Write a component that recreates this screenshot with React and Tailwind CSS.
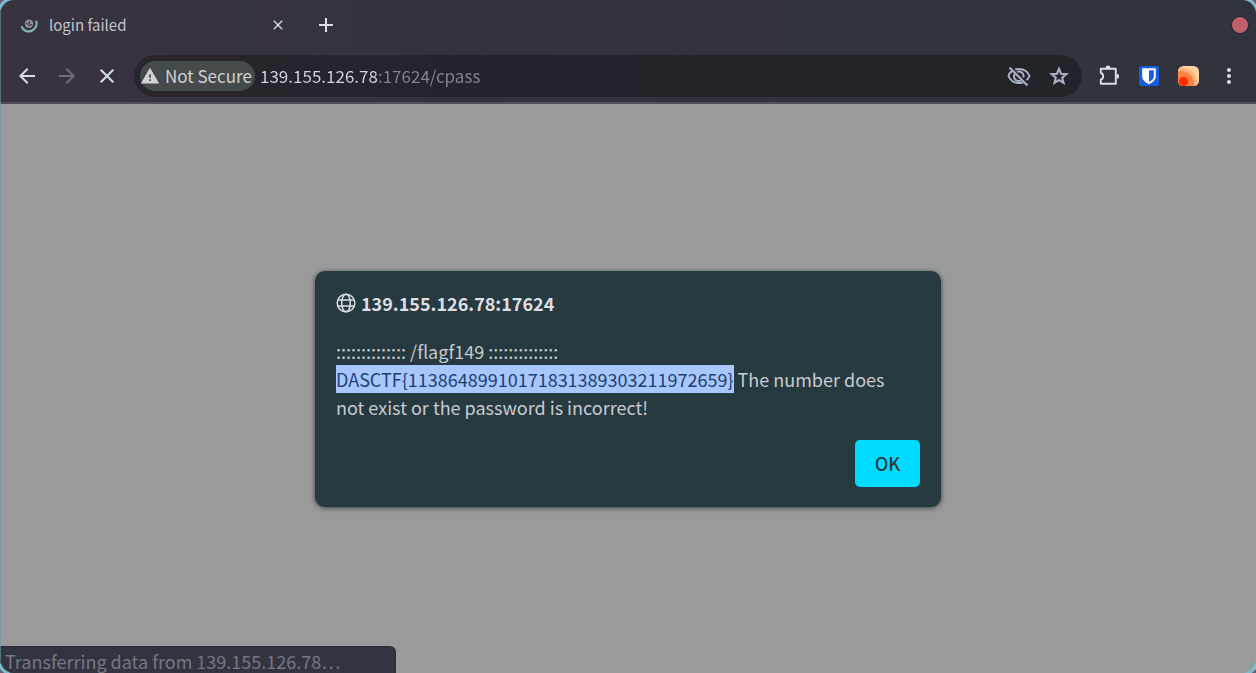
import React from "react";
import { MdArrowBack, MdArrowForward, MdClose, MdWarning, MdMoreVert, MdAdd } from "react-icons/md";

const TabSpinner = () => (
  <svg viewBox="0 0 20 20" className="size-5 shrink-0" aria-hidden="true">
    <path d="M2.400 11.200a7.800 7.800 0 0 0 14.800-5.400" fill="none" stroke="#7fb3ae" strokeWidth="2.200" />
    <circle cx="10" cy="8.800" r="4.200" fill="#97959f" />
    <path d="M7 8q1.500 1.800 3 .6t-.4-2.600M9.500 11.200q1.200-2 3.600-1.400" fill="none" stroke="#403c48" strokeWidth="1.200" />
  </svg>
);

const EyeOff = () => (
  <svg viewBox="0 0 24 24" className="size-6" fill="none" stroke="currentColor" strokeWidth="2" aria-hidden="true">
    <path d="M5.300 6.900C3.300 8.300 2 10.300 1.500 12c1.600 4 5.700 7 10.500 7 1.500 0 3-.3 4.300-.8M8.200 5.500C9.400 5.200 10.700 5 12 5c4.800 0 8.900 3 10.500 7-.6 1.600-1.700 3-3 4.100" />
    <path d="M7.800 9.800a4.600 4.600 0 0 0 6.600 6.200M10 7.900a4.600 4.600 0 0 1 6.300 5.600" />
    <path d="M2.500 3.500 20.500 21.500" />
  </svg>
);

const Star = () => (
  <svg viewBox="0 0 24 24" className="size-6" fill="none" stroke="currentColor" strokeWidth="2.100" strokeLinejoin="miter" aria-hidden="true">
    <path d="M12 4.800l2 4.900 5.300.4-4.100 3.500 1.300 5.200-4.500-2.800-4.500 2.800 1.300-5.200-4.100-3.500 5.300-.4z" />
  </svg>
);

const Puzzle = () => (
  <svg viewBox="0 0 22 22" className="size-[22px]" aria-hidden="true">
    <path
      d="M2.800 3.800h15v15h-15v-4.200c3.200-.8 3.200-5.800 0-6.600z"
      fill="none"
      stroke="currentColor"
      strokeWidth="1.900"
      strokeLinejoin="round"
    />
    <path d="M7.600 3a2.400 2.400 0 0 1 4.800 0zM18.600 8.800a2.500 2.500 0 0 1 0 5z" fill="currentColor" />
  </svg>
);

const Shield = () => (
  <svg viewBox="0 0 20 20" className="size-5" aria-hidden="true">
    <rect width="20" height="20" rx="2.500" fill="#175ddc" />
    <path d="M3.200 2.200h13.600v8.200c0 3.600-3.200 6-6.800 7.800-3.600-1.800-6.800-4.200-6.800-7.800z" fill="#fff" />
    <path d="M10 4.200h4.800v6.200c0 2.200-1.900 3.900-4.800 5.500z" fill="#175ddc" />
  </svg>
);

const OrangeExtension = () => (
  <svg viewBox="0 0 21 20" className="h-5 w-[21px]" aria-hidden="true">
    <defs>
      <clipPath id="tile">
        <rect width="21" height="20" rx="5.500" />
      </clipPath>
    </defs>
    <g clipPath="url(#tile)">
      <rect width="21" height="20" fill="#ffd0a0" />
      <circle cx="3" cy="18" r="16.500" fill="#ffb27a" />
      <circle cx="3" cy="18" r="13" fill="#ff8244" />
      <circle cx="5.500" cy="15.500" r="4.600" fill="#ff2a00" />
    </g>
  </svg>
);

const Globe = () => (
  <svg viewBox="0 0 20 20" className="size-5 shrink-0" fill="none" stroke="currentColor" strokeWidth="1.500" aria-hidden="true">
    <circle cx="10" cy="10" r="8.800" />
    <ellipse cx="10" cy="10" rx="4.300" ry="8.800" />
    <path d="M2 7h16M2 13h16" />
  </svg>
);

function TabStrip() {
  return (
    <div className="flex h-[50px] items-center pl-[19px] pr-2">
      <div className="flex w-[267px] items-center gap-2.5">
        <TabSpinner />
        <span className="grow text-[15px] text-[#c3c3cd]">login failed</span>
        <button aria-label="Close tab" className="text-[#dcdfe8]">
          <MdClose className="size-4" />
        </button>
      </div>
      <button aria-label="New tab" className="ml-7 text-[#dcdfe8]">
        <MdAdd className="size-6" />
      </button>
      <button aria-label="Close window" className="ml-auto size-4 rounded-full bg-[#c1616b] ring-1 ring-[#25262e]" />
    </div>
  );
}

function Toolbar() {
  return (
    <div className="flex h-[52px] items-center px-[15px] text-[#d8dee9]">
      <button aria-label="Back">
        <MdArrowBack className="size-6" />
      </button>
      <button aria-label="Forward" disabled className="ml-4 text-[#716d78]">
        <MdArrowForward className="size-6" />
      </button>
      <button aria-label="Stop loading" className="ml-4">
        <MdClose className="size-6" />
      </button>
      <div className="ml-[15px] flex h-[42px] grow items-center rounded-full bg-[linear-gradient(to_right,#29242d,#24242c_40%,#232429)] pl-1.5 pr-[11px]">
        <button className="flex h-[30px] w-[115px] shrink-0 items-center gap-[5px] whitespace-nowrap rounded-full bg-[#444b4a] text-[17px] text-[#d0d0d6]">
          <MdWarning className="size-5 shrink-0" />
          Not Secure
        </button>
        <input
          aria-label="Address"
          defaultValue="139.155.126.78:17624/cpass"
          className="ml-[5px] min-w-0 grow bg-[linear-gradient(to_right,#d3d6df_118px,#85858d_118px)] bg-clip-text text-[17px] text-transparent outline-none"
        />
        <div className="flex items-center gap-4 text-[#a9b1c6]">
          <button aria-label="Third-party cookies blocked">
            <EyeOff />
          </button>
          <button aria-label="Bookmark this page">
            <Star />
          </button>
        </div>
      </div>
      <div className="ml-4 flex items-center gap-[19px]">
        <button aria-label="Extensions">
          <Puzzle />
        </button>
        <button aria-label="Password manager">
          <Shield />
        </button>
        <button aria-label="Capture extension">
          <OrangeExtension />
        </button>
      </div>
      <button aria-label="Menu" className="ml-[18px]">
        <MdMoreVert className="size-6" />
      </button>
    </div>
  );
}

function AlertDialog() {
  return (
    <div
      role="alertdialog"
      aria-labelledby="alert-title"
      aria-describedby="alert-message"
      className="w-full max-w-[626px] rounded-[10px] bg-[#263a3f] px-[21px] pb-5 pt-[18px] shadow-[0_1px_5px_rgba(0,0,0,0.6)]"
    >
      <h1 id="alert-title" className="flex items-center gap-[5px] text-lg font-bold leading-7 text-[#dedee5]">
        <Globe />
        139.155.126.78:17624
      </h1>
      <p id="alert-message" className="mt-5 pr-3 text-lg leading-7 text-[#c9c9d1]">
        :::::::::::::: /flagf149 ::::::::::::::{" "}
        <mark className="bg-[#a9c7ff] py-px text-[#1c4076]">{"DASCTF{11386489910171831389303211972659}"}</mark> The number
        does not exist or the password is incorrect!
      </p>
      <div className="mt-[19px] flex justify-end">
        <button className="h-[47px] w-[65px] rounded-[5px] bg-[#00dcff] text-lg font-medium text-[#263a3f]">OK</button>
      </div>
    </div>
  );
}

export default function App() {
  return (
    <div className="h-screen bg-[#6b5f76] font-['Noto_Sans_CJK_SC','Noto_Sans',sans-serif]">
      <div className="relative flex h-full flex-col overflow-hidden rounded-[14px] bg-[#999a9b] shadow-[0_0_0_3px_#7cc0d4]">
        <header className="border-b-2 border-[#504e58] bg-[linear-gradient(to_right,#39333f,#35323e_35%,#31343d_75%)]">
          <TabStrip />
          <Toolbar />
        </header>
        <main className="flex grow items-center justify-center">
          <AlertDialog />
        </main>
        <div className="absolute bottom-0 left-0 h-[26px] w-[395px] rounded-tr-[5px] bg-[#323541] pl-[5px] text-lg leading-7 text-[#767781] ring-1 ring-[#2b2c35]">
          Transferring data from 139.155.126.78…
        </div>
        <div className="pointer-events-none absolute inset-0 rounded-[14px] border-l border-[#6d9aa8]/60" />
      </div>
    </div>
  );
}
